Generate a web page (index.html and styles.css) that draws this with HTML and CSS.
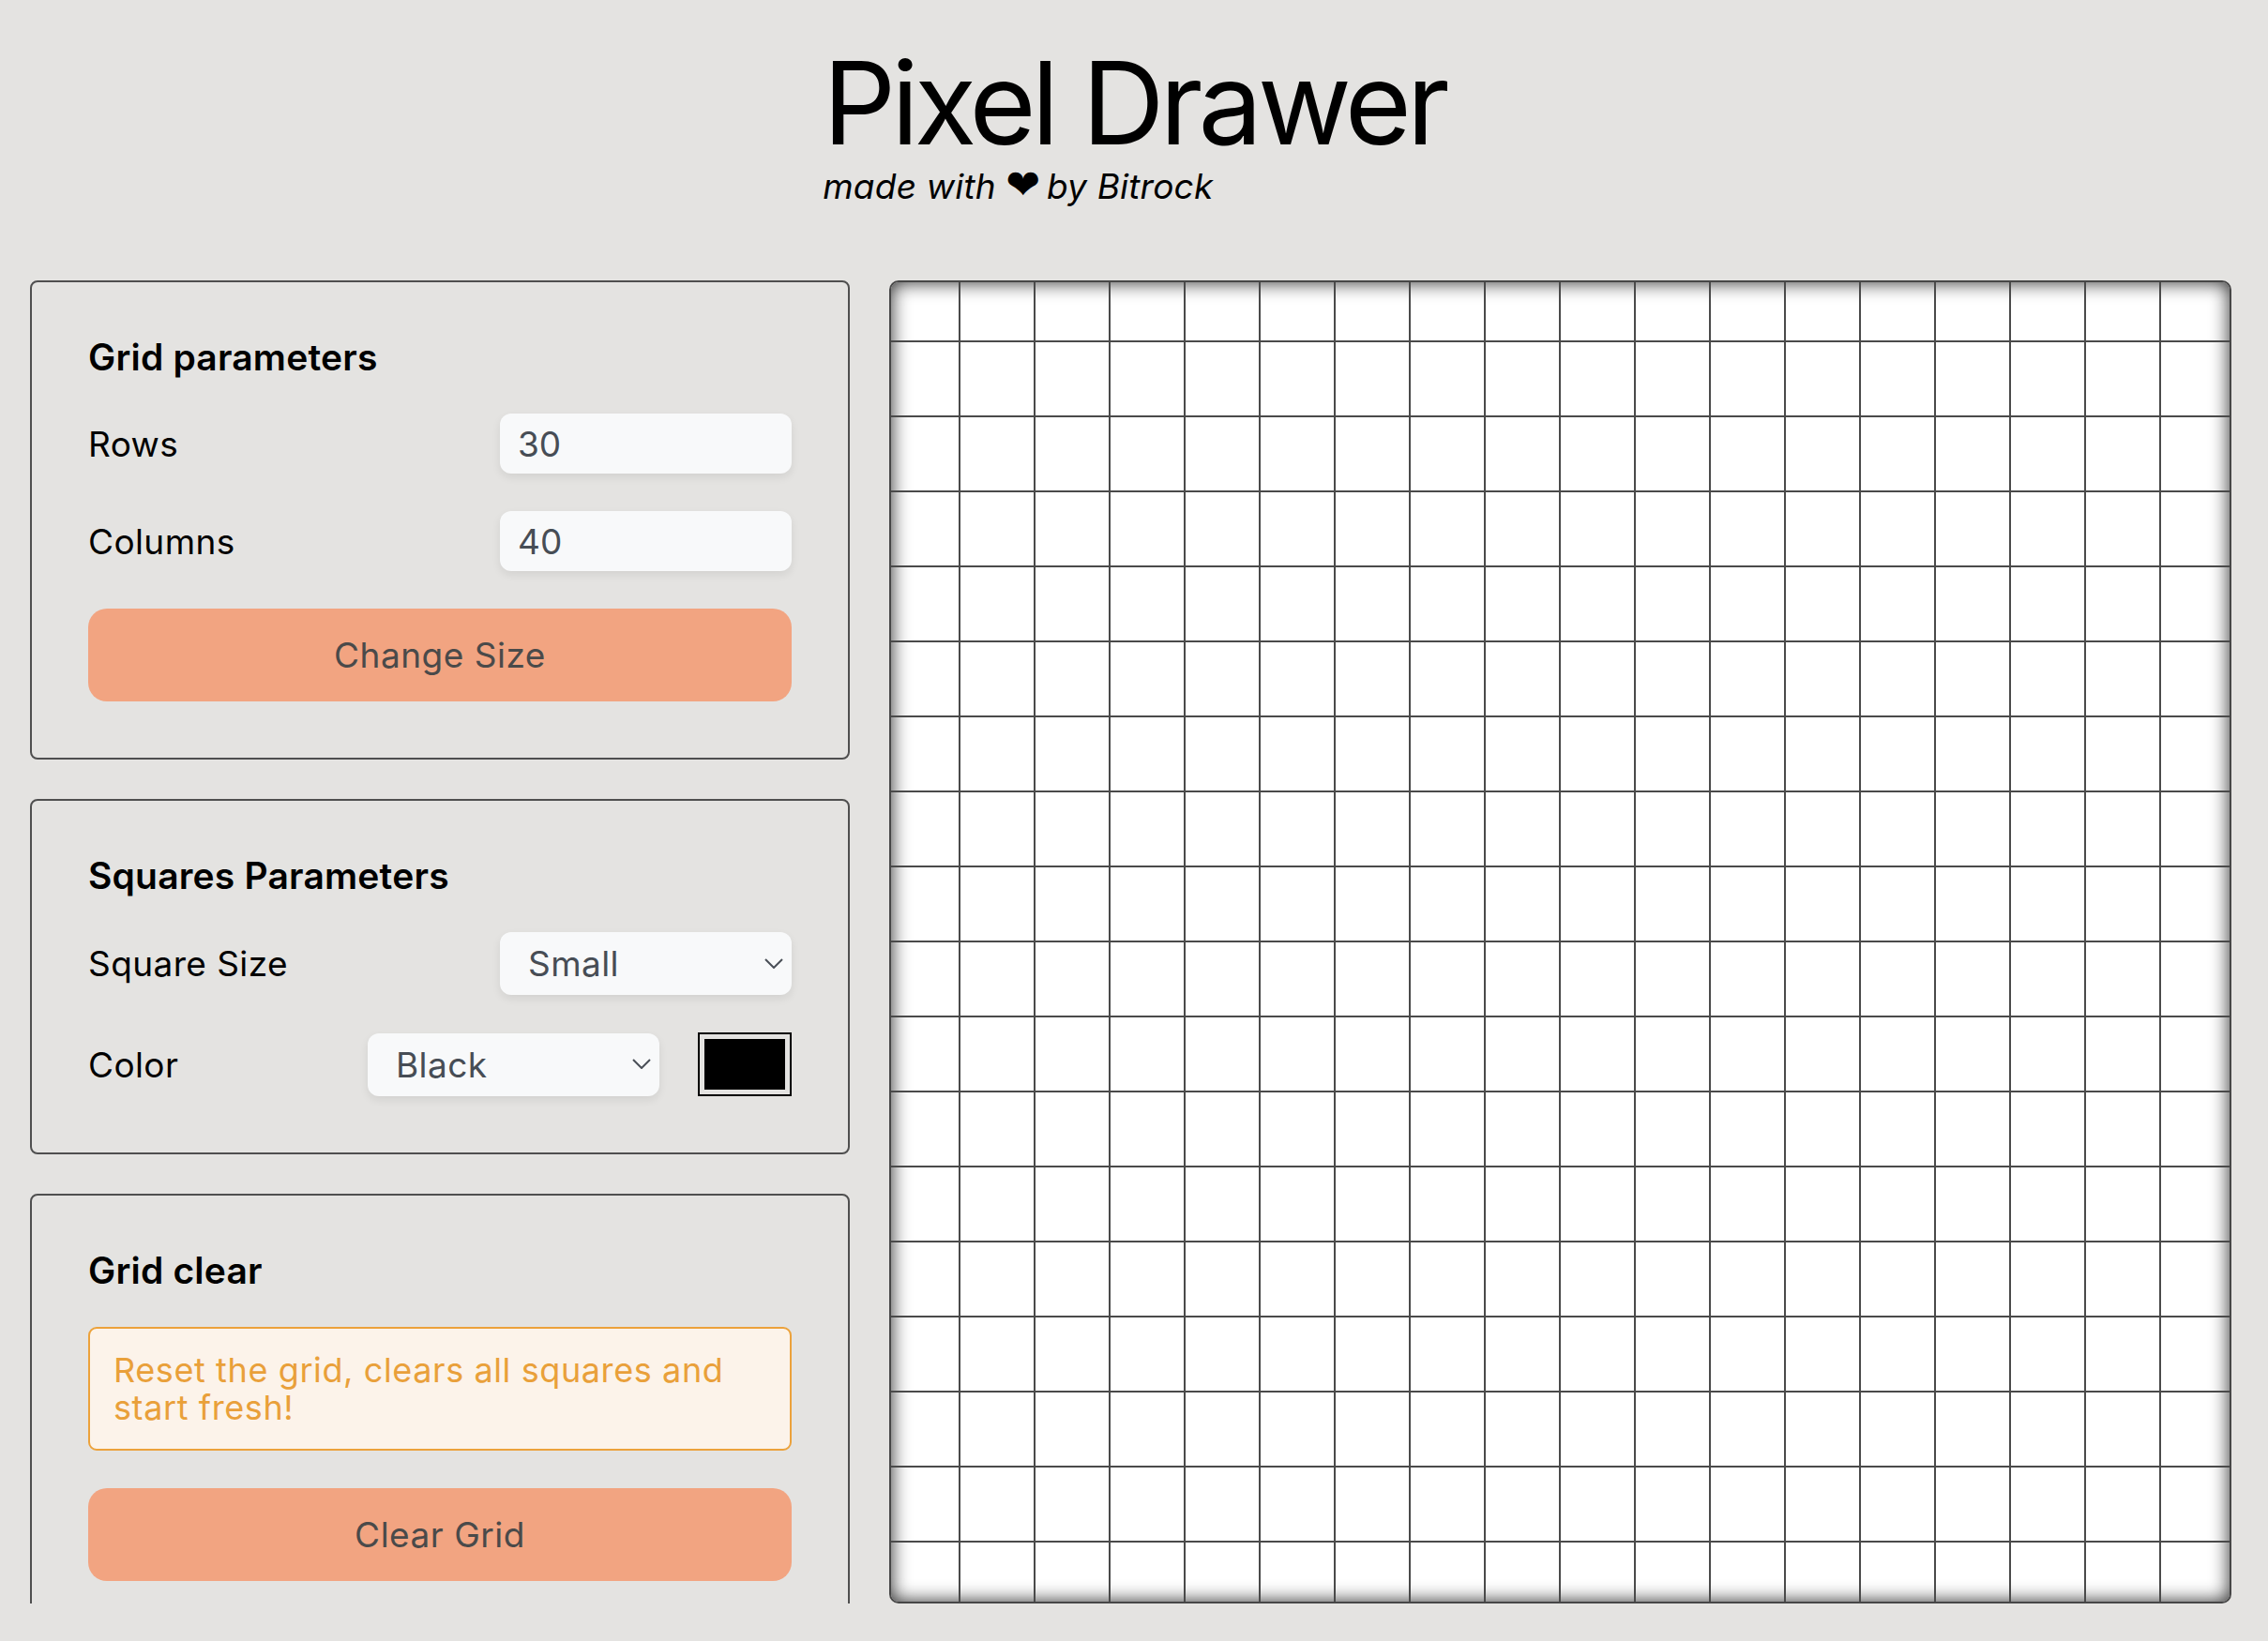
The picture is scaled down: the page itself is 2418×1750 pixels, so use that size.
FILE: index.html
```html
<!DOCTYPE html>
<html lang="en">
<head>
<meta charset="utf-8">
<title>Pixel Drawer</title>
<link rel="stylesheet" href="styles.css">
</head>
<body>
<header class="header">
  <div class="brand">
    <h1 class="title">Pixel Drawer</h1>
    <p class="subtitle">made with <span class="heart">&#10084;&#xFE0E;</span> by Bitrock</p>
  </div>
</header>
<main class="main">
  <aside class="sidebar">
    <section class="panel">
      <h2 class="panel-title">Grid parameters</h2>
      <div class="field">
        <label class="field-label" for="rows">Rows</label>
        <input id="rows" class="text-input" type="text" value="30">
      </div>
      <div class="field">
        <label class="field-label" for="cols">Columns</label>
        <input id="cols" class="text-input" type="text" value="40">
      </div>
      <button class="btn" type="button">Change Size</button>
    </section>
    <section class="panel">
      <h2 class="panel-title">Squares Parameters</h2>
      <div class="field">
        <label class="field-label" for="size">Square Size</label>
        <div class="select-wrap">
          <select id="size" class="select">
            <option>Small</option>
            <option>Medium</option>
            <option>Large</option>
          </select>
          <svg class="chevron" viewBox="0 0 20 11" aria-hidden="true"><path d="M1 1 L10 10 L19 1" fill="none" stroke="#4a4f57" stroke-width="2"/></svg>
        </div>
      </div>
      <div class="field">
        <label class="field-label" for="color">Color</label>
        <div class="select-wrap">
          <select id="color" class="select">
            <option>Black</option>
            <option>Red</option>
            <option>Green</option>
            <option>Blue</option>
          </select>
          <svg class="chevron" viewBox="0 0 20 11" aria-hidden="true"><path d="M1 1 L10 10 L19 1" fill="none" stroke="#4a4f57" stroke-width="2"/></svg>
        </div>
        <input class="swatch" type="color" value="#000000" aria-label="Custom color">
      </div>
    </section>
    <section class="panel">
      <h2 class="panel-title">Grid clear</h2>
      <div class="alert">Reset the grid, clears all squares and start fresh!</div>
      <button class="btn" type="button">Clear Grid</button>
    </section>
  </aside>
  <div class="board">
    <div class="canvas" id="canvas"></div>
  </div>
</main>
<script src="script.js"></script>
</body>
</html>
```
FILE: styles.css
```css
html, body {
  margin: 0;
  padding: 0;
}
body {
  background: #e4e3e1;
  font-family: Inter, "Noto Sans", sans-serif;
  color: #000;
  height: 1750px;
  overflow: hidden;
}
.header {
  display: flex;
  justify-content: center;
  padding-top: 45px;
}
.brand {
  text-align: left;
}
.title {
  margin: 0;
  font-size: 122px;
  font-weight: 400;
  line-height: 130px;
  letter-spacing: -5px;
}
.subtitle {
  margin: 4px 0 0;
  font-size: 37px;
  font-style: italic;
  line-height: 40px;
  letter-spacing: 0.2px;
}
.heart {
  font-family: "DejaVu Sans", sans-serif;
  font-style: normal;
  font-size: 44px;
  line-height: 0;
  letter-spacing: -4px;
}
.main {
  display: flex;
  gap: 42px;
  padding: 0 39px 0 32px;
  margin-top: 80px;
  height: 1411px;
}
.sidebar {
  width: 874px;
  flex: none;
  display: flex;
  flex-direction: column;
  gap: 42px;
  overflow: hidden;
}
.panel {
  flex: none;
  border: 2px solid #4f4f4f;
  border-radius: 8px;
  padding: 60px;
  display: flex;
  flex-direction: column;
  gap: 40px;
}
.panel-title {
  margin: 0;
  font-size: 39px;
  font-weight: 600;
  line-height: 40px;
  letter-spacing: 0.2px;
}
.field {
  display: flex;
  align-items: center;
  gap: 41px;
}
.field-label {
  flex: 1;
  font-size: 37px;
  letter-spacing: 0.4px;
}
.text-input {
  width: 311px;
  height: 64px;
  box-sizing: border-box;
  border: none;
  border-radius: 12px;
  background: #f8f9fa;
  box-shadow: 0 4px 10px rgba(0, 0, 0, 0.08);
  padding: 0 19px;
  font-family: inherit;
  font-size: 37px;
  color: #474d55;
  outline: none;
}
.select-wrap {
  position: relative;
  width: 311px;
  height: 67px;
  flex: none;
}
.select {
  -webkit-appearance: none;
  appearance: none;
  width: 100%;
  height: 100%;
  border: none;
  border-radius: 12px;
  background: #f8f9fa;
  box-shadow: 0 4px 10px rgba(0, 0, 0, 0.08);
  padding: 0 50px 0 30px;
  font-family: inherit;
  font-size: 37px;
  letter-spacing: 0.4px;
  color: #474d55;
  outline: none;
}
.chevron {
  position: absolute;
  right: 9px;
  top: 50%;
  width: 20px;
  height: 11px;
  margin-top: -6px;
  pointer-events: none;
}
.swatch {
  -webkit-appearance: none;
  appearance: none;
  flex: none;
  width: 100px;
  height: 68px;
  box-sizing: border-box;
  border: 2px solid #000;
  border-radius: 0;
  padding: 0;
  margin: 0;
  background: transparent;
}
.swatch::-webkit-color-swatch-wrapper {
  padding: 5px;
}
.swatch::-webkit-color-swatch {
  border: none;
  border-radius: 0;
}
.btn {
  height: 99px;
  border: none;
  border-radius: 20px;
  background: #f2a481;
  color: #4a4a4a;
  font-family: inherit;
  font-size: 37px;
  letter-spacing: 0.5px;
}
.alert {
  border: 2px solid #eca23b;
  background: #fcf3ea;
  color: #e9a03a;
  border-radius: 9px;
  padding: 24px 25px;
  font-size: 36px;
  line-height: 40px;
  letter-spacing: 0.6px;
}
.board {
  flex: 1;
  border: 2px solid #474747;
  border-radius: 10px;
  background: #fff;
  box-shadow: inset 0 0 20px rgba(0, 0, 0, 0.85);
  overflow: hidden;
  display: flex;
  align-items: center;
  justify-content: center;
}
.canvas {
  flex: none;
  display: grid;
  grid-template-columns: repeat(40, 80px);
  grid-auto-rows: 80px;
}
.cell {
  box-sizing: border-box;
  border-right: 2px solid #4a4a4a;
  border-bottom: 2px solid #4a4a4a;
}
```
FILE: script.js
```js
(function () {
  var canvas = document.getElementById('canvas');
  var rows = 30;
  var cols = 40;
  var frag = document.createDocumentFragment();
  for (var r = 0; r < rows; r++) {
    for (var c = 0; c < cols; c++) {
      var cell = document.createElement('div');
      cell.className = 'cell';
      frag.appendChild(cell);
    }
  }
  canvas.appendChild(frag);
})();
```
